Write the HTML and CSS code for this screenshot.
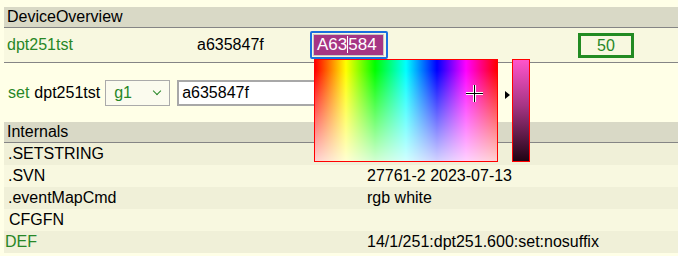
FILE: index.html
```html
<html>
    <head>
        <title>
            dpt251tst
        </title>
        <link rel="stylesheet" href="styles.css">
    </head>
    <body>
        <div class="block">
            <div class="hdr">DeviceOverview</div>
            <div class="overview">
                <span class="green">dpt251tst</span>
                <span>a635847f</span>
                <div class="colorwrap">
                    <div class="colorbox">A63<span class="caret"></span>584</div>
                </div>
                <div class="numbox">50</div>
            </div>
        </div>

        <div class="setrow">
            <span class="green">set</span>
            <span>dpt251tst</span>
            <div class="sel">g1<span class="chev"></span></div>
            <div class="txt">a635847f</div>
        </div>

        <div class="block">
            <div class="hdr">Internals</div>
            <div class="row odd"><span>.SETSTRING</span><span></span></div>
            <div class="row"><span>.SVN</span><span>27761-2 2023-07-13</span></div>
            <div class="row odd"><span>.eventMapCmd</span><span>rgb white</span></div>
            <div class="row"><span class="ind">CFGFN</span><span></span></div>
            <div class="row odd"><span class="green out">DEF</span><span>14/1/251:dpt251.600:set:nosuffix</span></div>
        </div>

        <!-- colour picker popup -->
        <div class="picker">
            <div class="field">
                <svg class="cross" width="17" height="17" viewBox="0 0 17 17">
                    <path d="M8.5 0v17M0 8.5h17" stroke="#fff" stroke-width="3"/>
                    <path d="M8.5 0v17M0 8.5h17" stroke="#000" stroke-width="1"/>
                </svg>
            </div>
            <div class="arrow"></div>
            <div class="bar"></div>
        </div>
    </body>
</html>
```
FILE: styles.css
```css
body {
    margin: 0;
    padding-top: 7px;
    background-color: #FFFFE7;
    font-family: "Liberation Sans", Arial, sans-serif;
    font-size: 16px;
    color: #000;
}
.green {
    color: #278727;
}
.block {
    margin-left: 4px;
    background-color: #F8F8E0;
}
.hdr {
    height: 20px;
    line-height: 20px;
    padding-left: 3px;
    background-color: #D9D9C6;
    border-bottom: 1px solid #858585;
}
.overview {
    display: grid;
    grid-template-columns: 190px 113px 268px 56px;
    align-items: center;
    height: 34px;
    padding-left: 3px;
    border-bottom: 1px solid #858585;
}
.colorwrap {
    width: 74px;
    height: 24px;
    border: 2px solid #1A6FE0;
    border-radius: 2px;
}
.colorbox {
    height: 20px;
    line-height: 20px;
    margin: 1px;
    padding-left: 3px;
    border: 1px solid #C8C8C8;
    background-color: #A63584;
    color: #fff;
    width: 66px;
    font-size: 17px;
}
.caret {
    display: inline-block;
    width: 1px;
    height: 17px;
    background-color: #fff;
    vertical-align: -3px;
}
.numbox {
    width: 50px;
    height: 19px;
    line-height: 19px;
    border: 3px solid #228B22;
    text-align: center;
    color: #278727;
}
.setrow {
    display: flex;
    align-items: center;
    gap: 5px;
    height: 58px;
    padding-left: 8px;
    padding-top: 1px;
}
.sel {
    position: relative;
    width: 55px;
    height: 24px;
    line-height: 24px;
    padding-left: 8px;
    border: 1px solid #AAAAAA;
    background-color: #FBFBEE;
    color: #278727;
}
.chev {
    position: absolute;
    right: 9px;
    top: 7px;
    width: 5px;
    height: 5px;
    border-right: 1.5px solid #278727;
    border-bottom: 1.5px solid #278727;
    transform: rotate(45deg);
}
.txt {
    margin-left: 2px;
    width: 150px;
    height: 22px;
    line-height: 22px;
    padding-left: 3px;
    border: 2px solid #A8A8A8;
    background-color: #fff;
}
.row {
    display: grid;
    grid-template-columns: 359px 1fr;
    height: 22px;
    line-height: 22px;
    padding-left: 4px;
}
.odd {
    background-color: #F0F0D8;
}
.ind {
    padding-left: 1px;
}
.out {
    margin-left: -3px;
}
.picker {
    position: absolute;
    left: 314px;
    top: 59px;
    display: flex;
    align-items: flex-start;
}
.field {
    position: relative;
    width: 182px;
    height: 101px;
    border: 1px solid #FF0000;
    background:
        linear-gradient(to bottom, rgba(255,255,255,0) 10%, rgba(255,255,255,0.82)),
        linear-gradient(to right, #f00, #ff0 17%, #0f0 33%, #0ff 50%, #00f 67%, #f0f 83%, #f00);
}
.cross {
    position: absolute;
    left: 151px;
    top: 25px;
}
.arrow {
    width: 0;
    height: 0;
    margin: 32px 2px 0 7px;
    border-top: 4px solid transparent;
    border-bottom: 4px solid transparent;
    border-left: 5px solid #000;
}
.bar {
    width: 16px;
    height: 101px;
    border: 1px solid #FF0000;
    background: linear-gradient(to bottom, #FF55CC, #A63584 45%, #200414);
}
```
